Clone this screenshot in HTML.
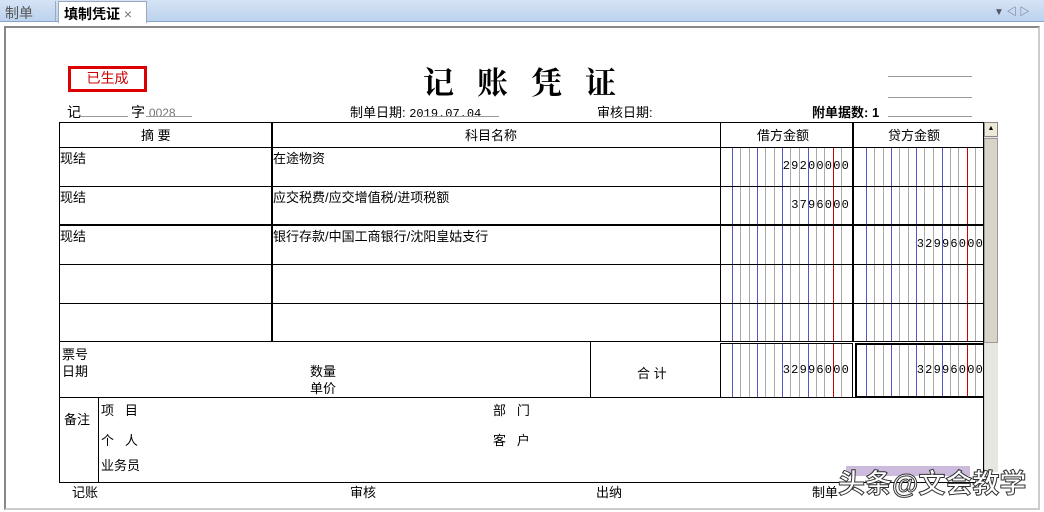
<!DOCTYPE html>
<html><head><meta charset="utf-8"><style>
*{margin:0;padding:0;box-sizing:border-box}
body{width:1044px;height:512px;background:#fff;position:relative;overflow:hidden;font-family:"Liberation Sans","Noto Sans CJK SC",sans-serif;font-size:13px;color:#000}
.a{position:absolute;white-space:nowrap}
.ln{position:absolute;background:#000}
.num{position:absolute;font-family:"Liberation Mono",monospace;font-size:12px;letter-spacing:1.2px;text-align:right}
</style></head><body>
<div class="a" style="left:0;top:0;width:1044px;height:22px;background:linear-gradient(#d5e3f5,#bcd2ee);border-bottom:1px solid #8aa4c8"></div>
<div class="a" style="left:0;top:1px;width:56px;height:21px;border-right:1px solid #9ab;color:#555;padding:2px 5px;font-size:14px">制单</div>
<div class="a" style="left:58px;top:1px;width:89px;height:22px;background:#fff;border:1px solid #9ab;border-bottom:none;padding:2px 5px;font-size:14px;font-weight:bold">填制凭证 <span style="color:#777;font-weight:normal">×</span></div>
<div class="a" style="left:994px;top:3px;color:#556;font-size:10px">▼ ◁ ▷</div>
<div class="a" style="left:4px;top:26px;width:1036px;height:484px;border:2px solid #888;border-right-color:#ccc;border-bottom-color:#ccc"></div>
<div class="a" style="left:423px;top:58px;font-size:31px;font-weight:bold;letter-spacing:23px;font-family:'Noto Serif CJK SC',serif">记账凭证</div>
<div class="a" style="left:68px;top:66px;width:79px;height:26px;border:3px solid #d00;color:#c00;text-align:center;font-size:14px;line-height:19px">已生成</div>
<div class="a" style="left:888px;top:76px;width:84px;height:1px;background:#999"></div>
<div class="a" style="left:888px;top:97px;width:84px;height:1px;background:#999"></div>
<div class="a" style="left:888px;top:116px;width:84px;height:1px;background:#999"></div>
<div class="a" style="left:67px;top:102px;font-size:14px">记</div>
<div class="a" style="left:80px;top:116px;width:48px;height:1px;background:#999"></div>
<div class="a" style="left:131px;top:102px;font-size:14px">字 <span style="color:#777;font-size:12px">0028</span></div>
<div class="a" style="left:146px;top:116px;width:46px;height:1px;background:#999"></div>
<div class="a" style="left:350px;top:102px;font-size:13px">制单日期: <span style="font-family:'Liberation Mono',monospace;font-size:12px">2019.07.04</span></div>
<div class="a" style="left:423px;top:116px;width:76px;height:1px;background:#999"></div>
<div class="a" style="left:597px;top:102px">审核日期:</div>
<div class="a" style="left:812px;top:102px;font-weight:bold">附单据数: 1</div>
<!-- digit grid -->
<svg class="a" style="left:0;top:0" width="1044" height="512">
<g stroke-width="1">
<g stroke="#55c"><line x1="732.5" y1="148" x2="732.5" y2="397"/><line x1="757.5" y1="148" x2="757.5" y2="397"/><line x1="782.5" y1="148" x2="782.5" y2="397"/><line x1="808.5" y1="148" x2="808.5" y2="397"/>
<line x1="866.5" y1="148" x2="866.5" y2="397"/><line x1="891.5" y1="148" x2="891.5" y2="397"/><line x1="916.5" y1="148" x2="916.5" y2="397"/><line x1="942.5" y1="148" x2="942.5" y2="397"/></g>
<g stroke="#aaa"><line x1="740.5" y1="148" x2="740.5" y2="397"/><line x1="749.5" y1="148" x2="749.5" y2="397"/><line x1="765.5" y1="148" x2="765.5" y2="397"/><line x1="774.5" y1="148" x2="774.5" y2="397"/><line x1="790.5" y1="148" x2="790.5" y2="397"/><line x1="799.5" y1="148" x2="799.5" y2="397"/><line x1="816.5" y1="148" x2="816.5" y2="397"/><line x1="824.5" y1="148" x2="824.5" y2="397"/><line x1="841.5" y1="148" x2="841.5" y2="397"/>
<line x1="874.5" y1="148" x2="874.5" y2="397"/><line x1="883.5" y1="148" x2="883.5" y2="397"/><line x1="899.5" y1="148" x2="899.5" y2="397"/><line x1="908.5" y1="148" x2="908.5" y2="397"/><line x1="924.5" y1="148" x2="924.5" y2="397"/><line x1="933.5" y1="148" x2="933.5" y2="397"/><line x1="950.5" y1="148" x2="950.5" y2="397"/><line x1="958.5" y1="148" x2="958.5" y2="397"/><line x1="975.5" y1="148" x2="975.5" y2="397"/></g>
<g stroke="#c00"><line x1="833.5" y1="148" x2="833.5" y2="397"/><line x1="967.5" y1="148" x2="967.5" y2="397"/></g>
</g>
<rect x="342" y="342" width="0" height="0"/>
<rect x="590" y="341" width="130" height="2" fill="#fff"/>
<rect x="720" y="341" width="264" height="2" fill="#fff"/>
</svg>
<!-- table -->
<div class="a" style="left:59px;top:122px;width:925px;height:361px;border:1px solid #000"></div>
<div class="ln" style="left:271px;top:122px;width:2px;height:220px"></div>
<div class="ln" style="left:720px;top:122px;width:1px;height:220px"></div>
<div class="ln" style="left:852px;top:122px;width:2px;height:220px"></div>
<div class="ln" style="left:59px;top:147px;width:925px;height:1px"></div>
<div class="ln" style="left:59px;top:186px;width:925px;height:1px"></div>
<div class="ln" style="left:59px;top:224px;width:925px;height:2px"></div>
<div class="ln" style="left:59px;top:264px;width:925px;height:1px"></div>
<div class="ln" style="left:59px;top:303px;width:925px;height:1px"></div>
<div class="ln" style="left:59px;top:341px;width:925px;height:1px"></div>
<div class="a" style="left:141px;top:125px">摘 要</div>
<div class="a" style="left:465px;top:125px">科目名称</div>
<div class="a" style="left:757px;top:125px">借方金额</div>
<div class="a" style="left:888px;top:125px">贷方金额</div>
<div class="a" style="left:60px;top:148px">现结</div><div class="a" style="left:273px;top:148px">在途物资</div>
<div class="a" style="left:60px;top:187px">现结</div><div class="a" style="left:273px;top:187px">应交税费/应交增值税/进项税额</div>
<div class="a" style="left:60px;top:226px">现结</div><div class="a" style="left:273px;top:226px">银行存款/中国工商银行/沈阳皇姑支行</div>
<div class="num" style="right:194px;top:159px">29200000</div>
<div class="num" style="right:194px;top:198px">3796000</div>
<div class="num" style="right:60px;top:237px">32996000</div>
<!-- totals -->
<div class="ln" style="left:590px;top:341px;width:1px;height:56px"></div>
<div class="ln" style="left:59px;top:397px;width:925px;height:1px"></div>
<div class="a" style="left:720px;top:343px;width:133px;height:55px;border:1px solid #000"></div>
<div class="a" style="left:855px;top:343px;width:129px;height:55px;border:2px solid #000;border-right:none"></div>
<div class="num" style="right:194px;top:363px">32996000</div>
<div class="num" style="right:60px;top:363px">32996000</div>
<div class="a" style="left:62px;top:346px;line-height:17px">票号<br>日期</div>
<div class="a" style="left:310px;top:363px;line-height:17px">数量<br>单价</div>
<div class="a" style="left:637px;top:363px">合 计</div>
<div class="ln" style="left:98px;top:397px;width:1px;height:86px"></div>
<div class="a" style="left:64px;top:409px">备注</div>
<div class="a" style="left:101px;top:400px">项&nbsp;&nbsp;&nbsp;目</div>
<div class="a" style="left:101px;top:430px">个&nbsp;&nbsp;&nbsp;人</div>
<div class="a" style="left:101px;top:455px">业务员</div>
<div class="a" style="left:493px;top:400px">部&nbsp;&nbsp;&nbsp;门</div>
<div class="a" style="left:493px;top:430px">客&nbsp;&nbsp;&nbsp;户</div>
<div class="a" style="left:72px;top:482px">记账</div>
<div class="a" style="left:350px;top:482px">审核</div>
<div class="a" style="left:596px;top:482px">出纳</div>
<div class="a" style="left:812px;top:482px">制单</div>
<!-- scrollbar -->
<div class="a" style="left:984px;top:122px;width:14px;height:350px;background:#e8e6e0;border-left:1px solid #ccc"></div>
<div class="a" style="left:984px;top:122px;width:14px;height:15px;background:#ece9d8;border:1px solid #888;font-size:7px;text-align:center;line-height:12px">▲</div>
<div class="a" style="left:984px;top:138px;width:14px;height:205px;background:#d8d4c8;border:1px solid #999"></div>
<div class="a" style="left:846px;top:466px;width:124px;height:10px;background:#cbd"></div>
<div class="a" style="left:838px;top:462px;font-size:27px;color:#fff;-webkit-text-stroke:1px #333;font-weight:bold">头条@文会教学</div>
</body></html>
